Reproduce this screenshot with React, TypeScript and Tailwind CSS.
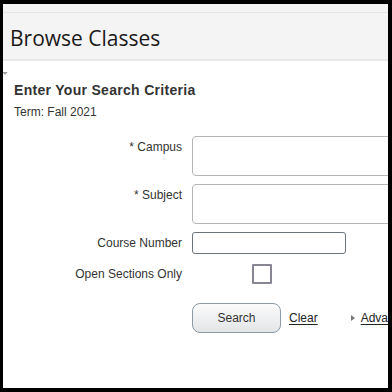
import React from "react";

const Label = ({ children }: { children: React.ReactNode }) => (
	<div className="w-[168px] shrink-0 h-[22px] flex items-center justify-end text-[12px] text-[#333]">
		{children}
	</div>
);

const App = () => {
	return (
		<div className="w-[392px] h-[392px] bg-black pt-[4px] pl-[3px] pr-[4px] pb-[4px] font-['Liberation_Sans',Arial,sans-serif]">
			<div className="w-full h-full bg-white overflow-hidden relative">
				<div className="h-[9px] bg-[#f4f4f4] border-b border-[#e6e6e6]"></div>
				<div className="h-[48px] bg-[#f4f4f4] border-b-2 border-[#e8e8e8] flex items-center pl-[7px] pt-[5px]">
					<h1 className="font-['Open_Sans',sans-serif] text-[21px] font-medium text-[#1a1a1a]">Browse Classes</h1>
				</div>
				<div className="absolute left-0 top-[66px] w-0 h-0 border-t-[4px] border-t-transparent border-l-[4px] border-l-[#999] rotate-[-45deg]"></div>
				<div className="pl-[11px] pt-[20px]">
					<h2 className="text-[14px] font-bold text-[#333] tracking-[0.3px] leading-[18px]">Enter Your Search Criteria</h2>
					<p className="text-[12px] text-[#333] mt-[6px] leading-[14px]">Term: Fall 2021</p>
				</div>
				<div className="flex flex-col mt-[17px] pl-[11px]">
					<div className="flex items-start gap-[10px]">
						<Label>* Campus</Label>
						<div className="w-[300px] h-[40px] shrink-0 border border-[#b5b5b5] rounded-[4px] bg-white"></div>
					</div>
					<div className="flex items-start gap-[10px] mt-[8px]">
						<Label>* Subject</Label>
						<div className="w-[300px] h-[40px] shrink-0 border border-[#b5b5b5] rounded-[4px] bg-white"></div>
					</div>
					<div className="flex items-start gap-[10px] mt-[8px]">
						<Label>Course Number</Label>
						<div className="w-[154px] h-[22px] shrink-0 border border-[#6b747a] rounded-[3px] bg-white"></div>
					</div>
					<div className="flex items-center gap-[10px] mt-[10px] h-[20px]">
						<Label>Open Sections Only</Label>
						<div className="ml-[60px] shrink-0 w-[20px] h-[20px] border-2 border-[#8a8593] rounded-[1px] bg-white"></div>
					</div>
					<div className="flex items-center mt-[19px] pl-[178px] w-[600px]">
						<button className="shrink-0 w-[89px] h-[30px] rounded-[8px] border border-[#8b9aa5] bg-gradient-to-b from-[#fbfbfb] to-[#e3e5e7] text-[12px] text-[#333]">
							Search
						</button>
						<a className="shrink-0 ml-[8px] text-[12px] text-[#222] underline underline-offset-2">Clear</a>
						<span className="shrink-0 ml-[33px] w-0 h-0 border-t-[3px] border-t-transparent border-b-[3px] border-b-transparent border-l-[4px] border-l-[#777]"></span>
						<a className="shrink-0 ml-[6px] text-[12px] text-[#222] underline underline-offset-2 whitespace-nowrap">Advanced Search</a>
					</div>
				</div>
			</div>
		</div>
	);
};

export default App;
